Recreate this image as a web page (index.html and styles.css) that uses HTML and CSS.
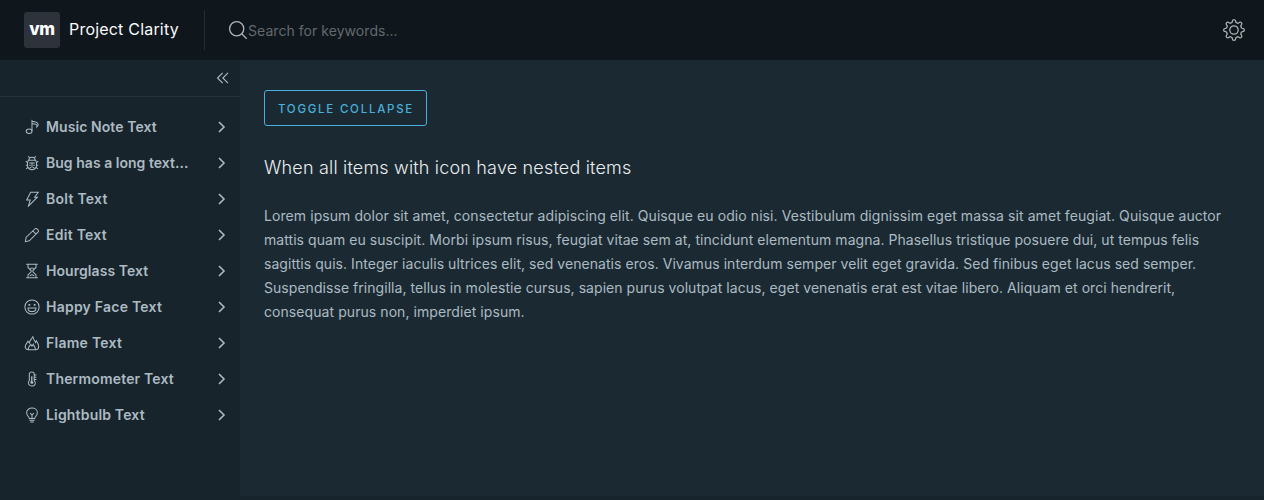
FILE: index.html
```html
<!DOCTYPE html>
<html lang="en">
<head>
<meta charset="utf-8">
<title>Project Clarity</title>
<link rel="stylesheet" href="styles.css">
</head>
<body>
<div class="app">
  <header class="header">
    <a class="brand"><span class="logo">vm</span><span class="title">Project Clarity</span></a>
    <label class="search">
      <svg class="search-icon" viewBox="0 0 20 20"><circle cx="8.700" cy="8.700" r="7.100"/><path d="M13.700 13.700l5 5"/></svg>
      <span class="placeholder">Search for keywords...</span>
    </label>
    <svg class="gear" viewBox="0 0 24 24"><circle cx="12" cy="12" r="4.2"/><path d="M10.300 3.500C10.400 1 13.600 1 13.700 3.500L14 4.500l2 .8.900-.6c1.900-1.500 3.900.5 2.400 2.400l-.6.900.8 2 1 .3c2.500.1 2.500 3.300 0 3.400l-1 .3-.8 2 .6.900c1.500 1.900-.5 3.900-2.400 2.400l-.9-.6-2 .8-.3 1c-.1 2.500-3.300 2.500-3.400 0l-.3-1-2-.8-.9.6c-1.900 1.500-3.900-.5-2.400-2.400l.6-.9-.8-2-1-.3c-2.500-.1-2.500-3.300 0-3.400l1-.3.800-2-.6-.9C3.200 5.200 5.200 3.200 7.100 4.700l.9.600 2-.8z"/></svg>
  </header>
  <div class="body">
    <nav class="sidenav">
      <div class="collapse"><svg viewBox="0 0 14 14"><path d="M6.700 1.800L1.500 7l5.200 5.200M12 1.800L6.800 7l5.200 5.200"/></svg></div>
      <ul class="menu">
        <li><svg class="icon" viewBox="0 0 36 36"><path d="M18 27V4c4 4 12 0 14 8 0 3-1 4-3 6 2-9-8-5-11-8"/><ellipse cx="11.500" cy="27.500" rx="6.500" ry="5"/></svg><span class="label w1">Music Note Text</span><svg class="caret" viewBox="0 0 12 12"><path d="M3 1l5 5-5 5"/></svg></li>
        <li><svg class="icon" viewBox="0 0 36 36"><path d="M10 12h16l2 4v8c0 5-5 9-10 9s-10-4-10-9v-8zM11 12c0-9 14-9 14 0M13 6L9 3M23 6l4-3M8 17l-4-3M8 23H4M9 28l-4 3M28 17l4-3M28 23h4M27 28l4 3M18 18v10M12 18h12"/><path d="M12 23h3M21 23h3M13 28h3M20 28h3"/></svg><span class="label w2">Bug has a long text...</span><svg class="caret" viewBox="0 0 12 12"><path d="M3 1l5 5-5 5"/></svg></li>
        <li><svg class="icon" viewBox="0 0 36 36"><path d="M15 3h17l-8 11h6L10 34l4-14H6z"/></svg><span class="label w3">Bolt Text</span><svg class="caret" viewBox="0 0 12 12"><path d="M3 1l5 5-5 5"/></svg></li>
        <li><svg class="icon" viewBox="0 0 36 36"><path d="M3 33l2-10L25 4c2-3 10 4 7 7L12 31zM20 9l7 7"/></svg><span class="label w4">Edit Text</span><svg class="caret" viewBox="0 0 12 12"><path d="M3 1l5 5-5 5"/></svg></li>
        <li><svg class="icon" viewBox="0 0 36 36"><path d="M5 3h26M5 33h26M9 3v7l7 7v3l-7 7v6M27 3v7l-7 7v3l7 7v6M14 12h8M13 29l5-3 5 3"/></svg><span class="label w5">Hourglass Text</span><svg class="caret" viewBox="0 0 12 12"><path d="M3 1l5 5-5 5"/></svg></li>
        <li><svg class="icon" viewBox="0 0 36 36"><circle cx="18" cy="18" r="16"/><path d="M9 20h18c0 11-18 11-18 0z"/><path class="solid" d="M10 11h4v4h-4zM22 11h4v4h-4z"/></svg><span class="label w6">Happy Face Text</span><svg class="caret" viewBox="0 0 12 12"><path d="M3 1l5 5-5 5"/></svg></li>
        <li><svg class="icon" viewBox="0 0 36 36"><path d="M10 33C3 33 1 27 4 22l5-8 3 4c1-7 6-9 8-15 0 7 4 9 6 14l2-4c6 9 8 20-2 20zM10 32c-1-6 3-6 5-11l3 4 3-4c1 5 6 6 4 11"/></svg><span class="label w7">Flame Text</span><svg class="caret" viewBox="0 0 12 12"><path d="M3 1l5 5-5 5"/></svg></li>
        <li><svg class="icon" viewBox="0 0 36 36"><path d="M12 21V7c0-6 11-6 11 0v14c6 6 1 13-5 13s-12-7-6-13zM24 9h4M24 14h4M24 19h4"/><path class="solid" d="M16 12h3v11c4 2 2 6-1 6s-6-4-2-6z"/></svg><span class="label w8">Thermometer Text</span><svg class="caret" viewBox="0 0 12 12"><path d="M3 1l5 5-5 5"/></svg></li>
        <li><svg class="icon" viewBox="0 0 36 36"><path d="M12 26c0-4-6-6-6-13 0-14 24-14 24 0 0 7-6 9-6 13zM12 30h12M14 34h8M18 25v-9M14 14l4 4 4-4"/></svg><span class="label w9">Lightbulb Text</span><svg class="caret" viewBox="0 0 12 12"><path d="M3 1l5 5-5 5"/></svg></li>
      </ul>
    </nav>
    <main class="content">
      <button class="toggle">TOGGLE COLLAPSE</button>
      <h1>When all items with icon have nested items</h1>
      <p><span class="l1">Lorem ipsum dolor sit amet, consectetur adipiscing elit. Quisque eu odio nisi. Vestibulum dignissim eget massa sit amet feugiat. Quisque auctor</span>
      <span class="l2">mattis quam eu suscipit. Morbi ipsum risus, feugiat vitae sem at, tincidunt elementum magna. Phasellus tristique posuere dui, ut tempus felis</span>
      <span class="l3">sagittis quis. Integer iaculis ultrices elit, sed venenatis eros. Vivamus interdum semper velit eget gravida. Sed finibus eget lacus sed semper.</span>
      <span class="l4">Suspendisse fringilla, tellus in molestie cursus, sapien purus volutpat lacus, eget venenatis erat est vitae libero. Aliquam et orci hendrerit,</span>
      <span class="l5">consequat purus non, imperdiet ipsum.</span></p>
    </main>
  </div>
</div>
</body>
</html>
```
FILE: styles.css
```css
* { box-sizing: border-box; }
body { margin: 0; background: #17242b; font-family: Inter, "Open Sans", sans-serif; overflow: hidden; }
svg { fill: none; stroke: currentColor; display: block; flex: none; }
.app { height: 500px; display: flex; flex-direction: column; }
.header { height: 60px; background: #0f161c; display: flex; align-items: center; padding: 0 18px 0 24px; flex: none; }
.brand { width: 181px; height: 40px; border-right: 1px solid #252c32; display: flex; align-items: center; }
.logo { width: 36px; height: 36px; border-radius: 3px; background: #2e333b; color: #fff; font: 800 17px/34px Inter, sans-serif; text-align: center; letter-spacing: -.4px; }
.title { margin-left: 9px; color: #fafafa; font-size: 16px; line-height: 24px; letter-spacing: .2px; white-space: nowrap; padding-bottom: 2px; }
.search { display: flex; align-items: center; margin-left: 23px; color: #b0b4b6; }
.search-icon { width: 20px; height: 20px; stroke-width: 1.3; }
.placeholder { color: #63696d; font-size: 14px; line-height: 20px; letter-spacing: .05px; padding-top: 2px; white-space: nowrap; }
.gear { width: 24px; height: 24px; margin-left: auto; color: #adb1b3; stroke-width: 1.3; stroke-linejoin: round; }
.body { flex: 1; display: flex; min-height: 0; }
.sidenav { width: 240px; background: #17242b; }
.collapse { height: 37px; border-bottom: 1px solid #25333a; display: flex; align-items: center; justify-content: flex-end; padding-right: 10px; color: #adbbc4; }
.collapse svg { width: 14px; height: 14px; stroke-width: 1.1; }
.menu { margin: 0; padding: 12px 12px 0 24px; list-style: none; color: #acbac3; }
.menu li { height: 36px; display: flex; align-items: center; font-size: 14px; font-weight: 600; }
.icon { width: 16px; height: 16px; stroke-width: 2.3; margin-right: 6px; }
.solid { fill: currentColor; stroke: none; }
.label { white-space: nowrap; padding-bottom: 2px; }
.w1 { letter-spacing: .08px; }
.w2 { letter-spacing: .03px; }
.w3, .w4, .w7 { letter-spacing: .26px; }
.w5 { letter-spacing: .06px; }
.w6 { letter-spacing: .23px; }
.w8, .w9 { letter-spacing: .17px; }
.caret { width: 12px; height: 12px; margin-left: auto; stroke-width: 1.6; }
.content { flex: 1; background: #1b2a32; padding: 30px 24px 0; margin-bottom: 4px; }
.toggle { display: block; width: 163px; height: 36px; padding: 2px 0 0; border: 1px solid #49afd9; border-radius: 3px; background: transparent; color: #49afd9; font: 500 11.5px/32px Inter, sans-serif; letter-spacing: 1.75px; text-indent: 1px; white-space: nowrap; }
h1 { margin: 30px 0 0; color: #eaedf0; font-size: 18px; font-weight: 300; line-height: 24px; letter-spacing: .18px; white-space: nowrap; }
p { margin: 24px 0 0; color: #acbac3; font-size: 14px; line-height: 24px; display: flex; flex-direction: column; align-items: flex-start; white-space: nowrap; }
.l1 { letter-spacing: .077px; }
.l2 { letter-spacing: .057px; }
.l3, .l4 { letter-spacing: .048px; }
.l5 { letter-spacing: .07px; }
```
